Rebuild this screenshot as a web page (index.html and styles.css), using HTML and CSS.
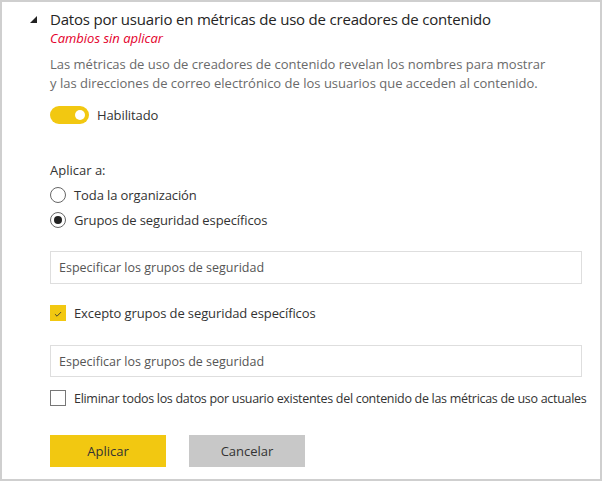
FILE: index.html
```html
<!DOCTYPE html>
<html lang="es">
<head>
<meta charset="utf-8">
<link rel="stylesheet" href="styles.css">
</head>
<body>
<div class="panel">
  <div class="header">
    <span class="caret"></span>
    <div class="head-text">
      <h1 class="title">Datos por usuario en métricas de uso de creadores de contenido</h1>
      <div class="unsaved">Cambios sin aplicar</div>
    </div>
  </div>
  <div class="content">
    <p class="desc">Las métricas de uso de creadores de contenido revelan los nombres para mostrar<br>y las direcciones de correo electrónico de los usuarios que acceden al contenido.</p>
    <div class="toggle-row">
      <span class="toggle"><span class="knob"></span></span>
      <span class="label">Habilitado</span>
    </div>
    <div class="apply-label">Aplicar a:</div>
    <div class="radio-row"><span class="radio"></span><span class="label">Toda la organización</span></div>
    <div class="radio-row"><span class="radio checked"></span><span class="label">Grupos de seguridad específicos</span></div>
    <div class="field field-groups">Especificar los grupos de seguridad</div>
    <div class="check-row check-except">
      <span class="check on"><svg width="16" height="16" viewBox="0 0 16 16"><path d="M4.5 8.2 L6.9 10.5 L11.5 5.8" fill="none" stroke="#333" stroke-width="1"/></svg></span>
      <span class="label">Excepto grupos de seguridad específicos</span>
    </div>
    <div class="field field-except">Especificar los grupos de seguridad</div>
    <div class="check-row check-delete">
      <span class="check"></span>
      <span class="label label-long">Eliminar todos los datos por usuario existentes del contenido de las métricas de uso actuales</span>
    </div>
    <div class="buttons">
      <button class="btn primary">Aplicar</button>
      <button class="btn secondary">Cancelar</button>
    </div>
  </div>
</div>
</body>
</html>
```
FILE: styles.css
```css
* { box-sizing: border-box; }
html, body { margin: 0; padding: 0; background: #fff; }
body { font-family: "Open Sans", "Noto Sans", sans-serif; color: #333; }
.panel {
  width: 602px;
  height: 481px;
  border: 2px solid #cfcfcf;
  overflow: hidden;
}
.header { display: flex; padding: 7px 0 0 28px; }
.caret {
  width: 0; height: 0;
  border-style: solid;
  border-width: 0 0 7px 7px;
  border-color: transparent transparent #222 transparent;
  margin-top: 7px;
  margin-right: 13px;
}
.title {
  margin: 0;
  font-size: 15px;
  font-weight: 400;
  color: #252423;
  line-height: 21px;
  letter-spacing: -0.2px;
}
.unsaved {
  font-size: 13px;
  font-style: italic;
  color: #e4002b;
  line-height: 17px;
}
.content { padding-left: 48px; }
.desc {
  margin: 8px 0 0;
  font-size: 13px;
  line-height: 19px;
  color: #6a6a6a;
}
.label { font-size: 13px; color: #333; letter-spacing: -0.1px; white-space: nowrap; }
.label-long { font-size: 12.5px; letter-spacing: -0.3px; }
.toggle-row { display: flex; align-items: center; margin-top: 13px; height: 18px; }
.toggle {
  width: 39px; height: 18px; border-radius: 9px; background: #f2c811;
  display: flex; align-items: center; justify-content: flex-end; padding-right: 4px;
  margin-right: 8px;
}
.knob { width: 10px; height: 10px; border-radius: 50%; background: #fff; }
.apply-label { font-size: 13px; color: #333; margin-top: 37px; line-height: 18px; }
.radio-row { display: flex; align-items: center; height: 18px; margin-top: 7px; }
.radio {
  width: 16px; height: 16px; border-radius: 50%; border: 1px solid #666;
  margin-right: 8px; display: flex; align-items: center; justify-content: center;
}
.radio.checked::after { content: ""; width: 8px; height: 8px; border-radius: 50%; background: #222; }
.field {
  width: 532px; height: 33px;
  border: 1px solid #dedede;
  font-size: 12.5px; color: #555; padding: 0 8px;
  display: flex; align-items: center;
}
.field-groups { margin-top: 22px; }
.field-except { margin-top: 23px; height: 32px; }
.check-row { display: flex; align-items: center; height: 18px; }
.check-except { margin-top: 20px; }
.check-delete { margin-top: 12px; }
.check {
  width: 16px; height: 16px; border: 1px solid #777; margin-right: 8px;
  display: flex; flex: none;
}
.check.on { background: #f2c811; border-color: #f2c811; }
.buttons { display: flex; gap: 23px; margin-top: 28px; }
.btn {
  width: 116px; height: 32px; border: none; font-family: inherit; font-size: 13px; color: #333;
}
.primary { background: #f2c811; }
.secondary { background: #c8c8c8; }
```
